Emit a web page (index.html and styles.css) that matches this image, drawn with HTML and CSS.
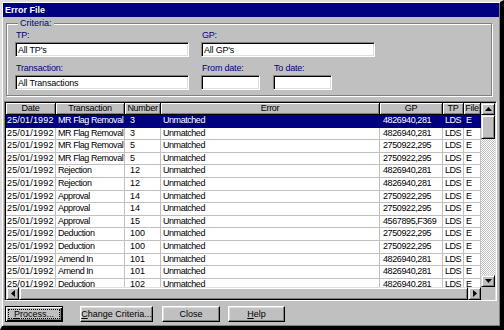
FILE: index.html
```html
<!DOCTYPE html>
<html lang="en">
<head>
    <meta charset="UTF-8">
    <title>Error File</title>
    <link rel="stylesheet" href="styles.css">
</head>
<body>
    <div class="window">
        <div class="titlebar">Error File</div>

        <fieldset class="criteria">
            <legend>Criteria:</legend>
            <div class="crit-row">
                <div class="field w-long">
                    <div class="lbl">TP:</div>
                    <div class="edit">All TP's</div>
                </div>
                <div class="field w-long">
                    <div class="lbl">GP:</div>
                    <div class="edit">All GP's</div>
                </div>
            </div>
            <div class="crit-row second">
                <div class="field w-long">
                    <div class="lbl">Transaction:</div>
                    <div class="edit">All Transactions</div>
                </div>
                <div class="field w-date">
                    <div class="lbl">From date:</div>
                    <div class="edit"></div>
                </div>
                <div class="field w-date to">
                    <div class="lbl">To date:</div>
                    <div class="edit"></div>
                </div>
            </div>
        </fieldset>

        <div class="grid">
            <div class="grid-top">
                <div class="table">
                    <div class="hdr cols">
                        <div>Date</div>
                        <div>Transaction</div>
                        <div>Number</div>
                        <div>Error</div>
                        <div>GP</div>
                        <div>TP</div>
                        <div>File</div>
                    </div>
                    <div class="rows" id="rows"></div>
                </div>
                <div class="vscroll">
                    <div class="sbtn">
                        <svg width="7" height="4" viewBox="0 0 7 4"><path d="M3.5 0L7 4H0z" fill="#000"/></svg>
                    </div>
                    <div class="vthumb"></div>
                    <div class="track"></div>
                    <div class="sbtn">
                        <svg width="7" height="4" viewBox="0 0 7 4"><path d="M0 0H7L3.5 4z" fill="#000"/></svg>
                    </div>
                </div>
            </div>
            <div class="grid-bottom">
                <div class="hscroll">
                    <div class="sbtn hb">
                        <svg width="4" height="7" viewBox="0 0 4 7"><path d="M4 0V7L0 3.5z" fill="#000"/></svg>
                    </div>
                    <div class="hthumb"></div>
                    <div class="sbtn hb">
                        <svg width="4" height="7" viewBox="0 0 4 7"><path d="M0 0L4 3.5L0 7z" fill="#000"/></svg>
                    </div>
                </div>
                <div class="corner"></div>
            </div>
        </div>

        <div class="buttons">
            <div class="btn default"><span class="focus"><u>P</u>rocess...</span></div>
            <div class="btn wide"><span><u>C</u>hange Criteria...</span></div>
            <div class="btn close"><span>Close</span></div>
            <div class="btn help"><span><u>H</u>elp</span></div>
        </div>
    </div>

<script>
    var data = [
        ["MR Flag Removal", "3", "4826940,281"],
        ["MR Flag Removal", "3", "4826940,281"],
        ["MR Flag Removal", "5", "2750922,295"],
        ["MR Flag Removal", "5", "2750922,295"],
        ["Rejection", "12", "4826940,281"],
        ["Rejection", "12", "4826940,281"],
        ["Approval", "14", "2750922,295"],
        ["Approval", "14", "2750922,295"],
        ["Approval", "15", "4567895,F369"],
        ["Deduction", "100", "2750922,295"],
        ["Deduction", "100", "2750922,295"],
        ["Amend In", "101", "4826940,281"],
        ["Amend In", "101", "4826940,281"],
        ["Deduction", "102", "4826940,281"]
    ];
    var rows = document.getElementById("rows");
    var html = "";
    for (var i = 0; i < data.length; i++) {
        html += '<div class="row cols' + (i == 0 ? ' sel' : '') + '">' +
            '<div class="c-date">25/01/1992</div>' +
            '<div>' + data[i][0] + '</div>' +
            '<div class="c-num">' + data[i][1] + '</div>' +
            '<div>Unmatched</div>' +
            '<div class="c-gp">' + data[i][2] + '</div>' +
            '<div>LDS</div>' +
            '<div>E</div>' +
            '</div>';
    }
    rows.innerHTML = html;
</script>
</body>
</html>
```

FILE: styles.css
```css
*{
    box-sizing: border-box;
}
html, body{
    margin: 0;
    padding: 0;
    background: #000;
}
body{
    font-family: "Liberation Sans", Arial, sans-serif;
    font-size: 9px;
    color: #000;
}
.window{
    width: 504px;
    height: 330px;
    background: #c0c0c0;
    border-style: solid;
    border-width: 2px 4px 4px 2px;
    border-color: #dfdfdf #000 #000 #dfdfdf;
    box-shadow: inset 1px 1px #fff, inset -1px -1px #808080;
    padding: 1px;
    display: flex;
    flex-direction: column;
}
.titlebar{
    height: 14px;
    line-height: 14px;
    background: #000080;
    color: #fff;
    font-weight: bold;
    padding-left: 2px;
}

/* criteria box */
.criteria{
    margin: 0 7px 0 3px;
    padding: 0 8px 5px 8px;
    border: 1px solid #808080;
    box-shadow: inset 1px 1px #fff, 1px 1px #fff;
    min-width: 0;
}
.criteria legend{
    margin-left: 3px;
    padding: 0 2px;
    line-height: 12px;
    color: #000080;
    background: #c0c0c0;
}
.crit-row{
    display: flex;
    gap: 12px;
}
.crit-row.second{
    margin-top: 5px;
}
.field .lbl{
    height: 12px;
    line-height: 12px;
    margin-bottom: 1px;
    padding-left: 1px;
    color: #000080;
    letter-spacing: -0.2px;
}
.w-long{
    width: 174px;
}
.w-date{
    width: 59px;
}
.field.to{
    margin-left: 1px;
}
.edit{
    height: 15px;
    line-height: 12px;
    background: #fff;
    border: 1px solid;
    border-color: #808080 #fff #fff #808080;
    box-shadow: inset 1px 1px #000, inset -1px -1px #dfdfdf;
    padding: 1px 2px;
    white-space: nowrap;
    letter-spacing: -0.2px;
}

/* grid */
.grid{
    margin: 5px 2px 0 1px;
    height: 200px;
    border: 1px solid;
    border-color: #808080 #fff #fff #808080;
    box-shadow: inset 1px 1px #000, inset -1px -1px #dfdfdf;
    padding: 1px;
    display: flex;
    flex-direction: column;
}
.grid-top{
    display: flex;
    height: 184px;
}
.table{
    flex: 1;
    background: #fff;
    overflow: hidden;
    display: flex;
    flex-direction: column;
}
.cols{
    display: grid;
    grid-template-columns: 50px 69px 36px 219px 63px 21px 17px;
}
.hdr{
    height: 12px;
    background: #c0c0c0;
}
.hdr div{
    line-height: 11px;
    text-align: center;
    border-right: 1px solid #000;
    border-bottom: 1px solid #000;
    box-shadow: inset 1px 1px #fff, inset -1px -1px #808080;
    white-space: nowrap;
    overflow: hidden;
    letter-spacing: -0.3px;
}
.rows{
    flex: 1;
    overflow: hidden;
}
.row{
    height: 12.6px;
}
.row div{
    line-height: 11.6px;
    padding-left: 2px;
    border-right: 1px solid #c0c0c0;
    border-bottom: 1px solid #c0c0c0;
    white-space: nowrap;
    overflow: hidden;
    letter-spacing: -0.45px;
}
.row .c-date{
    padding-left: 1px;
    letter-spacing: 0.15px;
}
.row .c-num{
    padding-left: 5px;
    letter-spacing: 0;
}
.row .c-gp{
    padding-left: 3px;
    letter-spacing: -0.4px;
}
.row.sel{
    background: #000080;
    color: #fff;
}
.row.sel div{
    border-color: #000080;
}

.vscroll{
    width: 14px;
    display: flex;
    flex-direction: column;
}
.sbtn{
    height: 12px;
    background: #c0c0c0;
    border: 1px solid;
    border-color: #dfdfdf #000 #000 #dfdfdf;
    box-shadow: inset 1px 1px #fff, inset -1px -1px #808080;
    display: flex;
    align-items: center;
    justify-content: center;
}
.vthumb{
    height: 24px;
    background: #c0c0c0;
    border: 1px solid;
    border-color: #dfdfdf #000 #000 #dfdfdf;
    box-shadow: inset 1px 1px #fff, inset -1px -1px #808080;
}
.track{
    flex: 1;
    background: repeating-conic-gradient(#fff 0 25%, #c0c0c0 0 50%) 0 0 / 2px 2px;
}
.grid-bottom{
    display: flex;
    height: 13px;
}
.hscroll{
    flex: 1;
    display: flex;
}
.sbtn.hb{
    height: 13px;
    width: 13px;
}
.hthumb{
    flex: 1;
    background: #c0c0c0;
    border: 1px solid;
    border-color: #dfdfdf #000 #000 #dfdfdf;
    box-shadow: inset 1px 1px #fff, inset -1px -1px #808080;
}
.corner{
    width: 14px;
    background: #c0c0c0;
}

/* buttons */
.buttons{
    display: flex;
    margin: 5px 0 0 2px;
}
.btn{
    width: 58px;
    height: 16px;
    background: #c0c0c0;
    border: 1px solid;
    border-color: #fff #000 #000 #fff;
    box-shadow: inset -1px -1px #808080, inset 1px 1px #dfdfdf;
    display: flex;
    align-items: center;
    justify-content: center;
    white-space: nowrap;
}
.btn.default{
    border: 1px solid #000;
    box-shadow: inset 1px 1px #fff, inset -1px -1px #000, inset -2px -2px #808080;
}
.btn .focus{
    width: 52px;
    height: 10px;
    line-height: 8px;
    border: 1px dotted #000;
    text-align: center;
}
.btn.wide{
    width: 73px;
    margin-left: 17px;
}
.btn.close{
    margin-left: 9px;
}
.btn.help{
    width: 57px;
    margin-left: 8px;
}
```
